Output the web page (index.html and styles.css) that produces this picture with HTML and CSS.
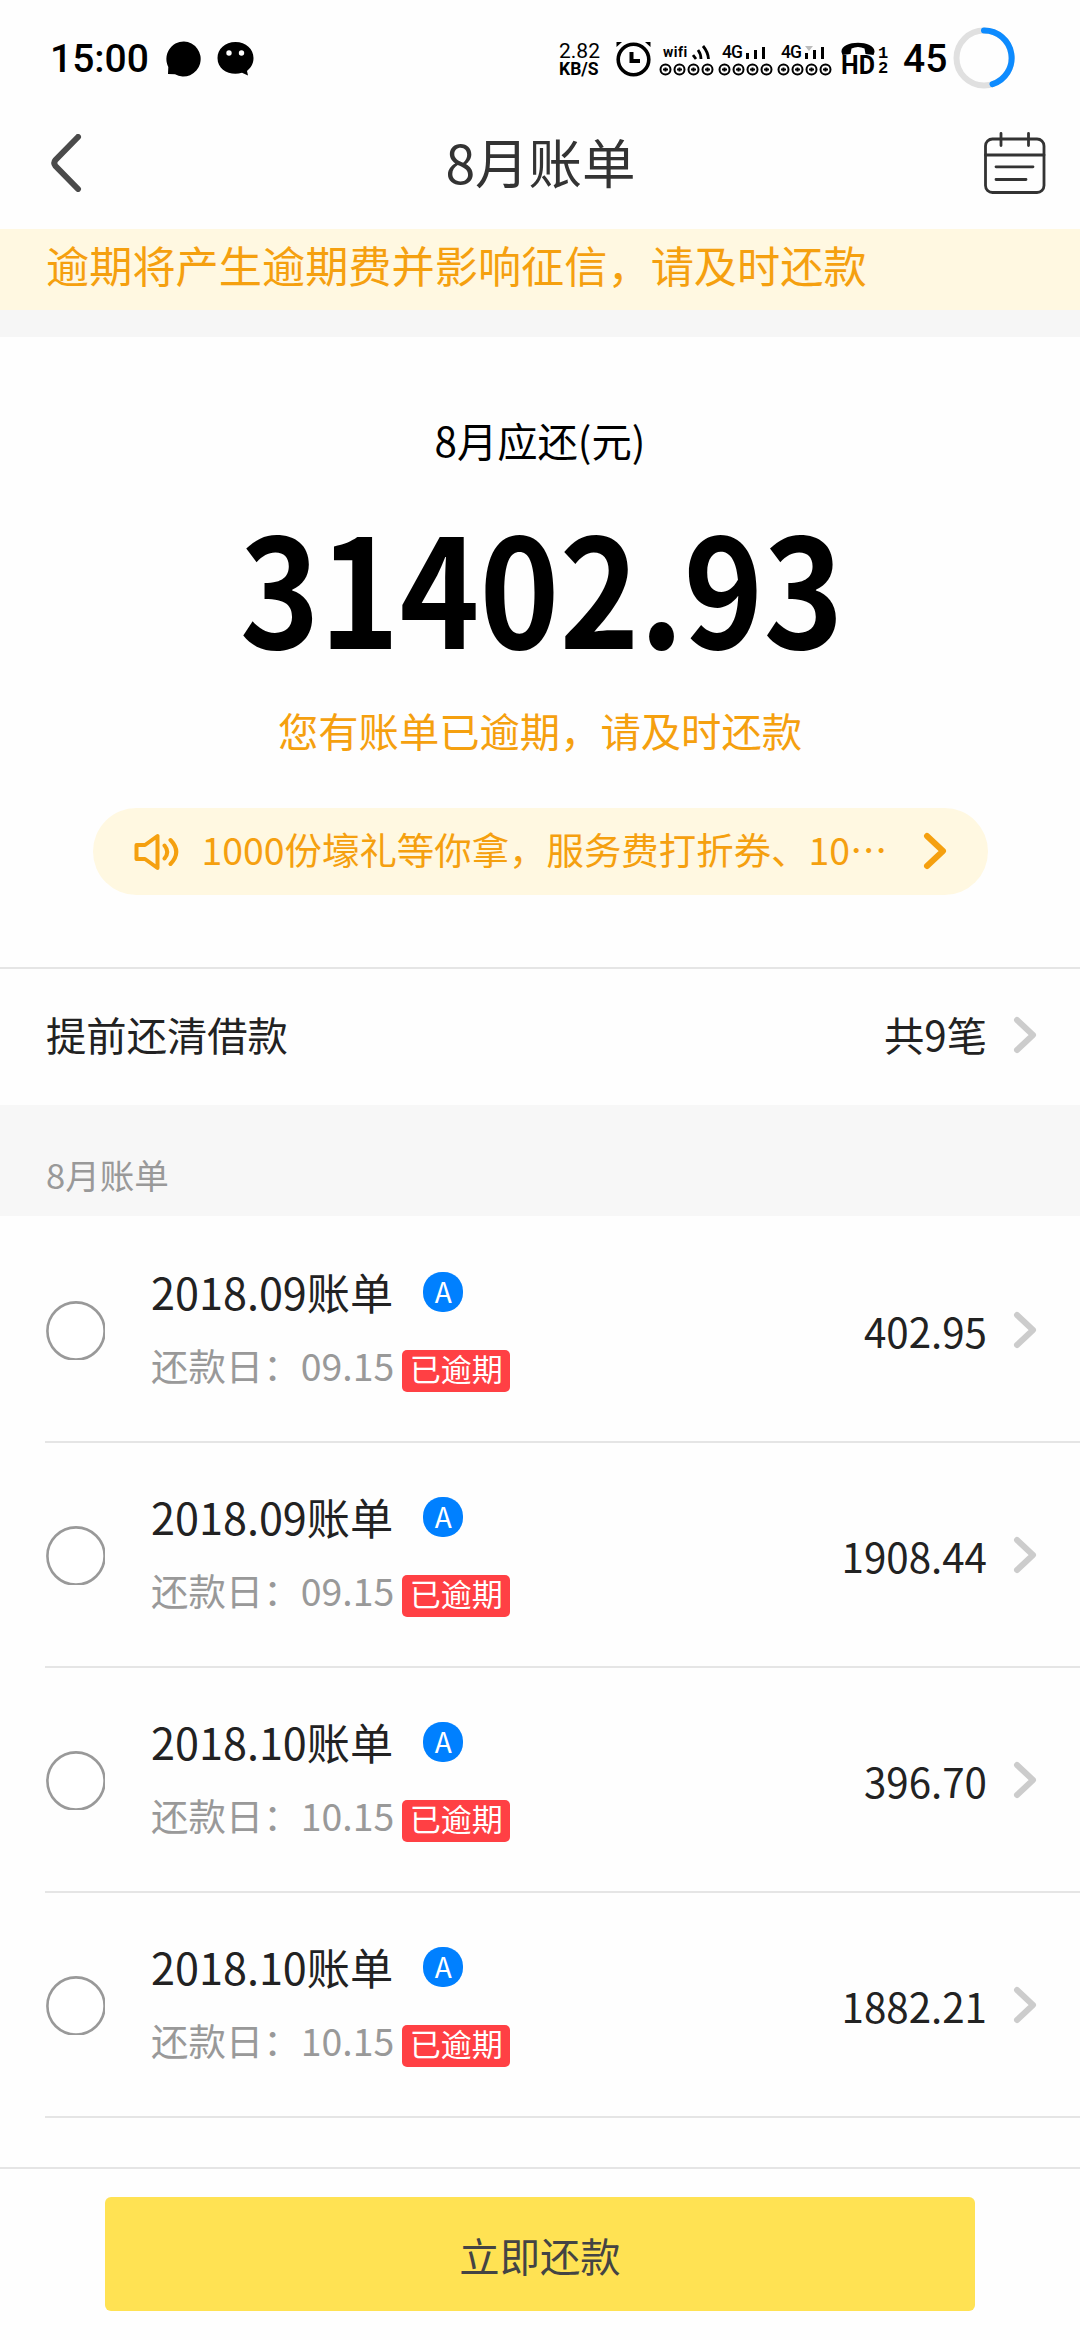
FILE: index.html
```html
<!DOCTYPE html>
<html lang="zh-CN">
<head>
<meta charset="utf-8">
<title>8月账单</title>
<link rel="stylesheet" href="styles.css">
</head>
<body>
<svg class="defs" aria-hidden="true">
  <symbol id="chev" viewBox="0 0 24 38"><path d="M4 4L20 19L4 34" fill="none" stroke="currentColor" stroke-width="6" stroke-linecap="round" stroke-linejoin="round"/></symbol>
  <symbol id="radio" viewBox="0 0 59 59"><circle cx="30" cy="30" r="28.6" fill="#fff" stroke="#999" stroke-width="2.6"/></symbol>
  <symbol id="dots" viewBox="0 0 55 13">
    <g fill="none" stroke="#000" stroke-width="2"><circle cx="6.5" cy="6.5" r="5"/><circle cx="20.5" cy="6.5" r="5"/><circle cx="34.5" cy="6.5" r="5"/><circle cx="48.5" cy="6.5" r="5"/></g>
    <path d="M6.5 4.500v4M4 6.500h5M20.500 4.500v4M18 6.500h5M34.500 4.500v4M32 6.500h5M48.500 4.500v4M46 6.500h5" stroke="#000" stroke-width="2"/>
  </symbol>
</svg>
<div class="screen">
  <div class="status">
    <span class="time">15:00</span>
    <svg class="bubble" viewBox="0 0 36 36"><path d="M18 0.500A17.300 17.500 0 1 1 9 33.300L2 33L2.300 26A17.300 17.500 0 0 1 18 0.500Z"/></svg>
    <svg class="wechat" viewBox="0 0 37 35"><path d="M18.500 1C29 1 36.500 8 36.500 17C36.500 23 33.500 27 30 30L31 34.500L25 31.800C14 35 0.500 30 0.500 17C0.500 8 8 1 18.500 1Z"/><g fill="#fff"><circle cx="12" cy="12" r="2.700"/><circle cx="24.500" cy="12" r="2.700"/></g></svg>
    <div class="speed"><span>2.82</span><b>KB/S</b></div>
    <svg class="alarm" viewBox="0 0 36 36"><circle cx="17.500" cy="18.500" r="15.300" fill="none" stroke="#000" stroke-width="3.600"/><path d="M0.500 6V1H6ZM34.500 6V1H29Z"/><path d="M15.500 11V20H24" fill="none" stroke="#000" stroke-width="4"/></svg>
    <div class="net"><div class="net-top"><span class="wifi">wifi</span><svg class="waves" viewBox="0 0 18 15"><path d="M1 10L4 14M6 5Q9 9 9 14M11 1Q16 7 16.500 14" fill="none" stroke="#000" stroke-width="2.800"/></svg></div><svg class="dots"><use href="#dots"/></svg></div>
    <div class="net"><div class="net-top"><span class="g4">4G</span><svg class="bars" viewBox="0 0 20 13"><path d="M0 7h3v6h-3zM8 4h3v9h-3zM16 1h3v12h-3z"/></svg></div><svg class="dots"><use href="#dots"/></svg></div>
    <div class="net"><div class="net-top"><span class="g4">4G</span><svg class="bars" viewBox="0 0 20 13"><path d="M0 0h8l-4 5z" fill="#bbb"/><path d="M0 7h3v6h-3zM8 4h3v9h-3zM16 1h3v12h-3z"/></svg></div><svg class="dots"><use href="#dots"/></svg></div>
    <div class="hd">
      <div class="hd-main"><svg class="phone" viewBox="0 0 34 14"><path d="M0.500 10C-0.500 -2.500 34.500 -2.500 33.500 10L32.500 13L24.500 12L23.500 6.500Q17 3.500 10.500 6.500L9.500 12L1.500 13Z"/></svg><span>HD</span></div>
      <div class="hd-num"><span>1</span><span>2</span></div>
    </div>
    <span class="level">45</span>
    <svg class="ring" viewBox="0 0 62 62"><circle cx="31" cy="31" r="27.500" fill="none" stroke="#e0e0e0" stroke-width="6"/><path d="M31 3.500A27.500 27.500 0 0 1 39.500 57.200" fill="none" stroke="#0d8bff" stroke-width="6" stroke-linecap="round"/></svg>
  </div>
  <header class="nav">
    <svg class="back" viewBox="0 0 32 58"><path d="M28 3L5.500 26Q3 29 5.500 32L28 55" fill="none" stroke="#4a4a4a" stroke-width="6" stroke-linecap="round"/></svg>
    <h1>8月账单</h1>
    <svg class="cal" viewBox="0 0 62 62" fill="none" stroke="#333" stroke-width="2.800" stroke-linecap="round"><rect x="1.500" y="7" width="58.500" height="53.500" rx="7"/><path d="M1.500 23H60M17 1.500V13.500M44.500 1.500V13.500M12 34.800H49M12 47.500H42"/></svg>
  </header>
  <div class="banner">逾期将产生逾期费并影响征信，请及时还款</div>
  <section class="summary">
    <div class="label">8月应还(元)</div>
    <div class="total">31402.93</div>
    <div class="warn">您有账单已逾期，请及时还款</div>
    <div class="promo">
      <svg class="speaker" viewBox="0 0 46 38" fill="none" stroke="#f5a00f" stroke-width="4" stroke-linejoin="round" stroke-linecap="round"><path d="M2.500 12H11L23.500 3V35L11 26H2.500Z"/><path d="M30.500 12.500Q36 19 30.500 25.500M36.500 7Q48 19 36.500 31"/></svg>
      <span>1000份壕礼等你拿，服务费打折券、10⋯</span>
      <svg class="chev"><use href="#chev"/></svg>
    </div>
  </section>
  <div class="early"><span>提前还清借款</span><span class="count">共9笔</span><svg class="chev"><use href="#chev"/></svg></div>
  <div class="group">8月账单</div>
  <main class="list">
    <div class="bill"><svg class="radio"><use href="#radio"/></svg><div class="info"><div class="name">2018.09账单<i>A</i></div><div class="due">还款日：09.15<em>已逾期</em></div></div><span class="sum">402.95</span><svg class="chev"><use href="#chev"/></svg></div>
    <div class="bill"><svg class="radio"><use href="#radio"/></svg><div class="info"><div class="name">2018.09账单<i>A</i></div><div class="due">还款日：09.15<em>已逾期</em></div></div><span class="sum">1908.44</span><svg class="chev"><use href="#chev"/></svg></div>
    <div class="bill"><svg class="radio"><use href="#radio"/></svg><div class="info"><div class="name">2018.10账单<i>A</i></div><div class="due">还款日：10.15<em>已逾期</em></div></div><span class="sum">396.70</span><svg class="chev"><use href="#chev"/></svg></div>
    <div class="bill"><svg class="radio"><use href="#radio"/></svg><div class="info"><div class="name">2018.10账单<i>A</i></div><div class="due">还款日：10.15<em>已逾期</em></div></div><span class="sum">1882.21</span><svg class="chev"><use href="#chev"/></svg></div>
  </main>
  <footer class="foot"><button class="pay">立即还款</button></footer>
</div>
</body>
</html>
```
FILE: styles.css
```css
* { box-sizing: border-box; }
body { margin: 0; background: #fefefe; font-family: "Noto Sans CJK SC", sans-serif; color: #222; }
svg { display: block; flex: none; }
.defs { position: absolute; width: 0; height: 0; }
.screen { width: 1080px; height: 2340px; display: flex; flex-direction: column; overflow: hidden; white-space: nowrap; }
.status { height: 117px; display: flex; align-items: center; padding-left: 50px; font-family: Roboto, sans-serif; color: #000; }
.time { width: 99px; font-size: 39px; font-weight: 500; line-height: 46px; }
.bubble { width: 36px; height: 36px; margin-left: 17px; }
.wechat { width: 37px; height: 35px; margin-left: 15px; }
.speed { width: 44px; margin-left: 305px; margin-top: 3px; display: flex; flex-direction: column; font-size: 21px; line-height: 18px; font-weight: 400; }
.speed b { font-size: 17.500px; line-height: 18px; font-weight: 700; }
.alarm { width: 36px; height: 36px; margin-left: 13px; }
.net { width: 55px; margin-left: 7px; margin-top: 3px; display: flex; flex-direction: column; }
.net + .net { margin-left: 4px; }
.net-top { height: 19px; padding-left: 4px; padding-bottom: 2px; display: flex; align-items: center; gap: 5px; }
.wifi { font-size: 14px; font-weight: 700; width: 28px; line-height: 15px; letter-spacing: .5px; }
.waves { width: 18px; height: 15px; margin-left: -4px; }
.g4 { font-size: 17.500px; font-weight: 500; letter-spacing: -1px; width: 19px; line-height: 17px; }
.bars { width: 20px; height: 13px; }
.dots { width: 55px; height: 13px; }
.hd { margin-left: 9px; display: flex; align-items: flex-end; gap: 3px; }
.hd-main { width: 34px; display: flex; flex-direction: column; }
.phone { width: 34px; height: 14px; }
.hd-main span { font-size: 25px; line-height: 20px; font-weight: 700; }
.hd-num { width: 10px; display: flex; flex-direction: column; font: 700 17px/15px "Liberation Mono", monospace; }
.level { margin-left: 15px; width: 43px; font-size: 39px; line-height: 46px; font-weight: 500; }
.ring { width: 62px; height: 62px; margin-left: 7px; margin-top: -2px; }
.nav { height: 112px; padding: 0 34px 21px 50px; display: grid; grid-template-columns: 62px 1fr 62px; align-items: center; }
.back { width: 32px; height: 58px; }
.cal { width: 62px; height: 62px; }
.nav h1 { margin: -3px 0 0; padding-right: 15px; text-align: center; font-size: 53.500px; line-height: 70px; font-weight: 400; color: #333; }
.banner { height: 81px; padding: 0 46px; background: #fff8e1; color: #f5a00f; font-size: 43.200px; line-height: 70px; }
.summary { height: 657px; border-top: 27px solid #f6f6f6; display: flex; flex-direction: column; align-items: center; }
.label { margin-top: 73px; font-size: 40.320px; line-height: 60px; color: #000; }
.total { margin-top: 28px; padding-left: 3px; font-size: 135.500px; line-height: 170px; font-weight: 700; color: #000; transform: scaleY(1.115); }
.warn { margin-top: 32px; font-size: 40.320px; line-height: 60px; color: #f5a00f; }
.promo { width: 895px; height: 87px; margin-top: 48px; padding: 0 40px 0 41px; border-radius: 44px; background: #fff8e1; color: #f5a00f; display: flex; align-items: center; font-size: 37.440px; }
.speaker { width: 46px; height: 38px; }
.promo span { width: 700px; margin-left: 22px; margin-top: -5px; }
.chev { width: 24px; height: 38px; color: #ccc; }
.promo .chev { margin-left: 21px; margin-top: -1px; color: #f5a00f; }
.early { height: 138px; border-top: 2px solid #e5e5e5; padding: 0 43px 4px 46px; display: flex; align-items: center; font-size: 40.320px; }
.early span { margin-top: -4px; }
.count { margin-left: auto; margin-right: 26px; }
.group { height: 111px; padding: 44px 46px 0; background: #f7f7f7; color: #999; font-size: 34.560px; line-height: 50px; }
.list { height: 951px; }
.bill { height: 227px; margin: 0 0 -2px 45px; padding-right: 43px; border-bottom: 2px solid #e5e5e5; display: flex; align-items: center; }
.radio { width: 59px; height: 59px; margin: 3px 0 0 1px; }
.info { margin: -6px 0 0 46px; }
.name { display: flex; align-items: center; font-size: 43.200px; line-height: 64px; }
.name i { width: 40px; height: 40px; margin-left: 30px; margin-top: 3px; border-radius: 19px; background: #0080ff; color: #fff; font-style: normal; font-size: 28px; line-height: 38px; text-align: center; }
.due { display: flex; align-items: center; margin-top: 14px; font-size: 37.440px; line-height: 56px; color: #999; }
.due em { width: 108px; height: 42px; margin-left: 8px; margin-top: 13px; border-radius: 5px; background: #ff4044; color: #fff; font-style: normal; font-size: 31px; line-height: 35px; text-align: center; }
.sum { margin-top: 4px; margin-left: auto; margin-right: 26px; font-size: 40.320px; }
.bill .chev { margin-top: 2px; }
.foot { height: 173px; border-top: 2px solid #e5e5e5; padding: 28px 105px 0; }
.pay { display: block; width: 870px; height: 114px; border: 0; border-radius: 6px; background: #ffe253; color: #444; font: 40.320px "Noto Sans CJK SC", sans-serif; }
```
